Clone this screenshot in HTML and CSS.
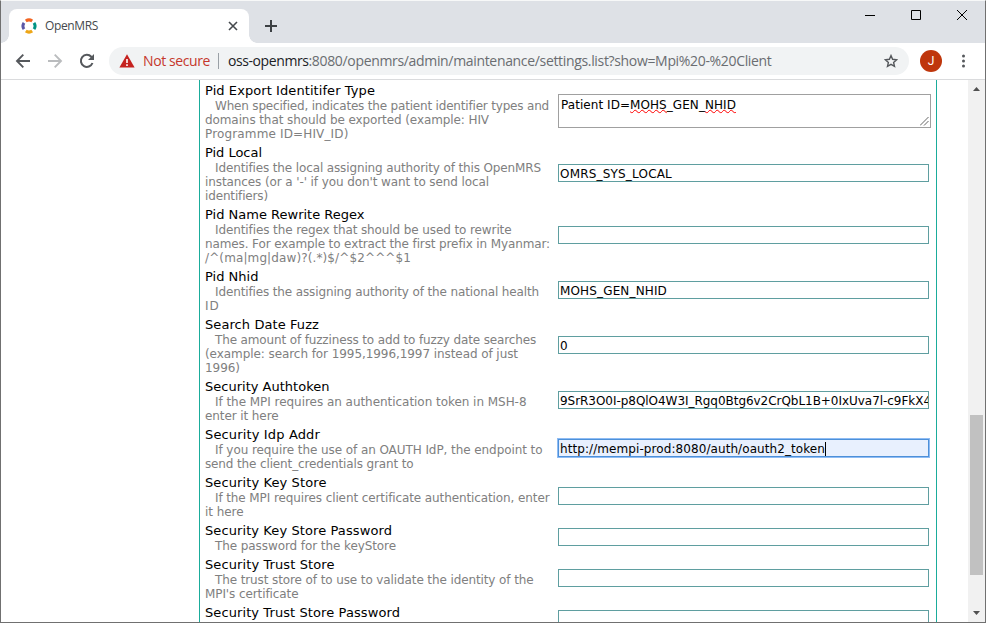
FILE: index.html
```
<!DOCTYPE html>
<html lang="en">
<head>
<meta charset="utf-8">
<title>OpenMRS</title>
<link rel="stylesheet" href="styles.css">
</head>
<body>
<div class="window">
  <header class="tabstrip">
    <div class="tab">
      <svg class="favicon" width="16" height="16" viewBox="0 0 16 16" fill="none" stroke-width="3">
        <path d="M4.8 3Q8 .8 11.2 3" stroke="#f26522"/>
        <path d="M13 4.8Q15.2 8 13 11.2" stroke="#009384"/>
        <path d="M11.2 13Q8 15.2 4.8 13" stroke="#eea616"/>
        <path d="M3 11.2Q.8 8 3 4.8" stroke="#5b57a6"/>
      </svg>
      <span class="tab-title"><span data-w="53">OpenMRS</span></span>
      <svg class="tab-close" width="10" height="10" viewBox="0 0 10 10" stroke="#45494d" stroke-width="1.6"><path d="M1 1l8 8M9 1l-8 8"/></svg>
    </div>
    <svg class="new-tab" width="12" height="12" viewBox="0 0 12 12" stroke="#3c4043" stroke-width="2"><path d="M6 0v12M0 6h12"/></svg>
    <div class="controls">
      <svg width="10" height="10" viewBox="0 0 10 10" stroke="#000"><path d="M0 5.5h10"/></svg>
      <svg width="10" height="10" viewBox="0 0 10 10" stroke="#000" fill="none"><path d="M.5.5h9v9h-9z"/></svg>
      <svg width="10" height="10" viewBox="0 0 10 10" stroke="#000"><path d="M0 0l10 10M10 0L0 10"/></svg>
    </div>
  </header>
  <nav class="toolbar">
    <svg class="nav-icon" width="16" height="16" viewBox="0 0 16 16" fill="none" stroke="#55585c" stroke-width="1.9"><path d="M15 8H2.5M8.3 1.7L2 8l6.3 6.3"/></svg>
    <svg class="nav-icon" width="16" height="16" viewBox="0 0 16 16" fill="none" stroke="#babcbe" stroke-width="1.9"><path d="M1 8h12.5M7.7 1.7L14 8l-6.3 6.3"/></svg>
    <svg class="nav-icon" width="16" height="16" viewBox="0 0 16 16" fill="none" stroke="#55585c" stroke-width="2"><path d="M13.5 10A6 6 0 1 1 12.3 3.8L14 5.5"/><path d="M15 1v6H9z" fill="#55585c" stroke="none"/></svg>
    <div class="omnibox">
      <svg class="warn" width="16" height="14" viewBox="0 0 16 14"><path d="M8 .3L15.6 13.5H.4z" fill="#c5221f"/><path d="M8 5v4M8 10.2v1.8" stroke="#fff" stroke-width="1.6"/></svg>
      <span class="insecure"><span data-w="67">Not secure</span></span>
      <span class="rule"></span>
      <span class="url"><span class="host" data-w="80.5">oss-openmrs</span><span data-w="463">:8080/openmrs/admin/maintenance/settings.list?show=Mpi%20-%20Client</span></span>
      <svg class="star" width="14" height="14" viewBox="0 0 14 14" fill="none" stroke="#55585c" stroke-width="1.4"><path d="M7 1.6l1.6 3.7 4 .4-3 2.7.9 4L7 10.3l-3.5 2.1.9-4-3-2.7 4-.4z"/></svg>
    </div>
    <span class="avatar">J</span>
    <svg class="dots" width="4" height="14" viewBox="0 0 4 14" fill="#55585c"><circle cx="1.5" cy="2" r="1.5"/><circle cx="1.5" cy="7" r="1.5"/><circle cx="1.5" cy="12" r="1.5"/></svg>
  </nav>
  <div class="viewport">
    <main class="panel">
      <section class="row">
        <div class="info">
          <h2><span data-w="170">Pid Export Identitifer Type</span></h2>
          <p><span data-w="334">When specified, indicates the patient identifier types and</span><span data-w="284">domains that should be exported (example: HIV</span><span data-w="143.5">Programme ID=HIV_ID)</span></p>
        </div>
        <div class="field area"><span class="value" data-w="175">Patient ID=<span class="typo">MOHS</span>_GEN_<span class="typo">NHID</span></span>
          <svg class="grip" width="9" height="9" viewBox="0 0 9 9" stroke="#666"><path d="M0 8.5L8.5 0M4 8.5L8.5 4"/></svg>
        </div>
      </section>
      <section class="row">
        <div class="info">
          <h2><span data-w="57">Pid Local</span></h2>
          <p><span data-w="326">Identifies the local assigning authority of this OpenMRS</span><span data-w="284">instances (or a '-' if you don't want to send local</span><span data-w="63">identifiers)</span></p>
        </div>
        <div class="field"><span class="value" data-w="112">OMRS_SYS_LOCAL</span></div>
      </section>
      <section class="row">
        <div class="info">
          <h2><span data-w="159.5">Pid Name Rewrite Regex</span></h2>
          <p><span data-w="296.5">Identifies the regex that should be used to rewrite</span><span data-w="345">names. For example to extract the first prefix in Myanmar:</span><span data-w="206">/^(ma|mg|daw)?(.*)$/^$2^^^$1</span></p>
        </div>
        <div class="field"></div>
      </section>
      <section class="row">
        <div class="info">
          <h2><span data-w="53.5">Pid Nhid</span></h2>
          <p><span data-w="324">Identifies the assigning authority of the national health</span><span data-w="14.5">ID</span></p>
        </div>
        <div class="field"><span class="value" data-w="107">MOHS_GEN_NHID</span></div>
      </section>
      <section class="row">
        <div class="info">
          <h2><span data-w="114">Search Date Fuzz</span></h2>
          <p><span data-w="321">The amount of fuzziness to add to fuzzy date searches</span><span data-w="313">(example: search for 1995,1996,1997 instead of just</span><span data-w="35">1996)</span></p>
        </div>
        <div class="field"><span class="value">0</span></div>
      </section>
      <section class="row">
        <div class="info">
          <h2><span data-w="124.5">Security Authtoken</span></h2>
          <p><span data-w="311.5">If the MPI requires an authentication token in MSH-8</span><span data-w="73.5">enter it here</span></p>
        </div>
        <div class="field"><span class="value" data-w="371">9SrR3O0I-p8QlO4W3I_Rgq0Btg6v2CrQbL1B+0IxUva7l-c9FkX4</span></div>
      </section>
      <section class="row">
        <div class="info">
          <h2><span data-w="115">Security Idp Addr</span></h2>
          <p><span data-w="327.5">If you require the use of an OAUTH IdP, the endpoint to</span><span data-w="208.5">send the client_credentials grant to</span></p>
        </div>
        <div class="field focused"><span class="value" data-w="265">http://mempi-prod:8080/auth/oauth2_token</span><span class="caret"></span></div>
      </section>
      <section class="row">
        <div class="info">
          <h2><span data-w="121.5">Security Key Store</span></h2>
          <p><span data-w="334.5">If the MPI requires client certificate authentication, enter</span><span data-w="38.5">it here</span></p>
        </div>
        <div class="field"></div>
      </section>
      <section class="row">
        <div class="info">
          <h2><span data-w="187">Security Key Store Password</span></h2>
          <p><span data-w="181">The password for the keyStore</span></p>
        </div>
        <div class="field"></div>
      </section>
      <section class="row">
        <div class="info">
          <h2><span data-w="129.5">Security Trust Store</span></h2>
          <p><span data-w="318.5">The trust store of to use to validate the identity of the</span><span data-w="93.5">MPI's certificate</span></p>
        </div>
        <div class="field"></div>
      </section>
      <section class="row">
        <div class="info">
          <h2><span data-w="195">Security Trust Store Password</span></h2>
          <p class="blank"></p>
        </div>
        <div class="field"></div>
      </section>
    </main>
    <aside class="scrollbar">
      <svg width="7" height="4" viewBox="0 0 7 4" fill="#505050"><path d="M3.5 0L7 4H0z"/></svg>
      <div class="thumb"></div>
      <svg width="7" height="4" viewBox="0 0 7 4" fill="#505050"><path d="M0 0h7L3.5 4z"/></svg>
    </aside>
  </div>
</div>
<script src="fit.js"></script>
</body>
</html>
```
FILE: fit.js
```
// Tracks each labelled run so that it spans its data-w width.
document.querySelectorAll('[data-w]').forEach(function (el) {
  var width = el.getBoundingClientRect().width;
  var gap = (parseFloat(el.dataset.w) - width) / el.textContent.length;
  el.style.letterSpacing = gap.toFixed(4) + 'px';
});
```
FILE: styles.css
```
* { box-sizing: border-box; }
body { margin: 0; background: #fff; }
svg { display: block; flex: none; }

.window {
  width: 986px;
  height: 623px;
  display: flex;
  flex-direction: column;
  border: 1px solid #707070;
  border-top-color: #f7f8f8;
  background: #fff;
  overflow: hidden;
  font-family: "Open Sans", "Noto Sans", sans-serif;
}

.tabstrip {
  height: 42px;
  flex: none;
  display: flex;
  background: #dee1e6;
  padding: 8px 18px 0 8px;
}
.tab {
  position: relative;
  width: 240px;
  height: 34px;
  display: flex;
  align-items: center;
  padding: 0 11px 0 12px;
  background: #fff;
  border-radius: 8px 8px 0 0;
}
.tab::before, .tab::after {
  content: "";
  position: absolute;
  bottom: 0;
  width: 8px;
  height: 8px;
}
.tab::before { left: -8px; background: radial-gradient(circle at 0 0, #dee1e6 7.5px, #fff 8px); }
.tab::after { right: -8px; background: radial-gradient(circle at 100% 0, #dee1e6 7.5px, #fff 8px); }
.tab-title {
  flex: 1;
  margin-left: 8px;
  font-size: 12px;
  line-height: 16px;
  color: #45494d;
  white-space: nowrap;
}
.new-tab { margin: 11px 0 0 16px; }
.controls { margin: 1px 0 0 auto; display: flex; gap: 36px; }

.toolbar {
  height: 37px;
  flex: none;
  display: flex;
  align-items: center;
  padding: 0 19px 0 14px;
  border-bottom: 1px solid #dadbdd;
}
.nav-icon { margin-right: 16px; }
.omnibox {
  width: 800px;
  height: 28px;
  margin-left: -2px;
  display: flex;
  align-items: center;
  padding: 0 11px 0 10px;
  border-radius: 14px;
  background: #f1f3f4;
  font-size: 14px;
  line-height: 20px;
  white-space: nowrap;
}
.insecure { width: 75px; margin-left: 8px; color: #c5372c; }
.rule { width: 1px; height: 16px; background: #9aa0a6; }
.url { flex: 1; margin-left: 9px; color: #6a6d71; }
.host { color: #202124; }
.avatar {
  width: 22px;
  height: 22px;
  margin: 0 0 0 11px;
  border-radius: 50%;
  background: #bf360c;
  color: #fff;
  font: 12px/22px Roboto, sans-serif;
  text-align: center;
}
.dots { margin-left: auto; }

.viewport { flex: 1; min-height: 0; display: flex; }
.panel {
  width: 738px;
  margin-left: 198px;
  padding: 3px 0 0 5px;
  border: solid #1aac9b;
  border-width: 0 1px;
  overflow: hidden;
}
.row { display: flex; align-items: center; margin-bottom: 4px; }
.info { width: 353px; flex: none; white-space: nowrap; }
.info h2 {
  margin: 0;
  height: 16px;
  font: 13px/15px "DejaVu Sans", sans-serif;
  color: #000;
}
.info p { margin: 0; font: 12px/14px "DejaVu Sans", sans-serif; color: #808080; }
.info p span { display: table; }
.info p span:first-child { margin-left: 10px; }
.info .blank { height: 14px; }

.field {
  width: 371px;
  height: 18px;
  flex: none;
  display: flex;
  align-items: flex-start;
  margin-bottom: 3px;
  padding: 2px 0 0 1px;
  border: 1px solid #5f9ea0;
  background: #fff;
  color: #000;
  font: 12px/15px "DejaVu Sans", sans-serif;
  white-space: nowrap;
  overflow: hidden;
}
.value { flex: none; }
.area {
  position: relative;
  width: 373px;
  height: 34px;
  padding: 3px 2px;
  border-color: #a0a0a0;
}
.typo { text-decoration: underline wavy #f00 1px; text-underline-offset: 0; text-decoration-skip-ink: none; }
.grip { position: absolute; right: 1px; bottom: 1px; }
.focused { border-color: #4d90d9; background: #e8f0fe; box-shadow: 0 0 0 1px #8fbcf4; }
.caret { width: 1px; height: 14px; background: #000; }

.scrollbar {
  width: 17px;
  margin-left: auto;
  display: flex;
  flex-direction: column;
  align-items: center;
  padding: 7px 0;
  background: #f1f1f1;
}
.thumb { width: 13px; height: 160px; margin: 324px 0 auto; background: #c1c1c1; }
```
